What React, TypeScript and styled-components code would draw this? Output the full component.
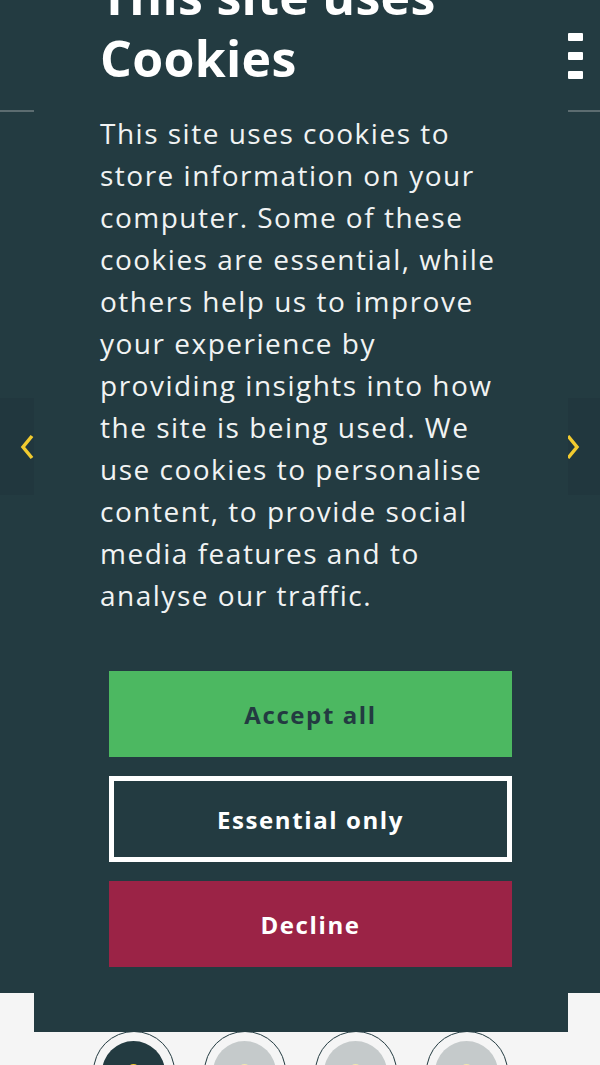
import styled, { createGlobalStyle } from 'styled-components';

const TEAL = '#233b41';
const GREEN = '#4cb861';
const BERRY = '#9b2346';
const LIGHT = '#f5f5f5';

const COOKIE_TEXT =
  'This site uses cookies to store information on your computer. Some of these cookies are essential, while others help us to improve your experience by providing insights into how the site is being used. We use cookies to personalise content, to provide social media features and to analyse our traffic.';

const FEATURES = [{ active: true }, { active: false }, { active: false }, { active: false }];

const GlobalStyle = createGlobalStyle`
  body {
    margin: 0;
    background-color: ${TEAL};
    font-family: 'Open Sans', 'Liberation Sans', sans-serif;
  }
`;

export default function App() {
  return (
    <>
      <GlobalStyle />
      <Page>
        <Header>
          <Burger aria-label='menu'>
            <span />
            <span />
            <span />
          </Burger>
        </Header>
        <Hero>
          <ArrowBox>
            <Chevron dir='left' />
          </ArrowBox>
          <ArrowBox>
            <Chevron dir='right' />
          </ArrowBox>
        </Hero>
        <Features>
          {FEATURES.map((f, i) => (
            <Ring key={i}>
              <Disc $active={f.active}>
                <Dot $active={f.active} />
              </Disc>
            </Ring>
          ))}
        </Features>

        <Modal role='dialog'>
          <Title>This site uses Cookies</Title>
          <Body>{COOKIE_TEXT}</Body>
          <Buttons>
            <Button $variant='accept'>Accept all</Button>
            <Button $variant='outline'>Essential only</Button>
            <Button $variant='decline'>Decline</Button>
          </Buttons>
        </Modal>
      </Page>
    </>
  );
}

const Chevron = ({ dir }: { dir: 'left' | 'right' }) => (
  <svg width='14' height='26' viewBox='0 0 14 26'>
    <path
      d={dir === 'left' ? 'M12 2 L3 13 L12 24' : 'M2 2 L11 13 L2 24'}
      fill='none'
      stroke='#f2cb2f'
      strokeWidth='3.5'
    />
  </svg>
);

// ROOT
const Page = styled.div`
  position: relative;
  height: 1065px;
  overflow: hidden;
  display: flex;
  flex-direction: column;
`;

// HEADER
const Header = styled.header`
  flex-shrink: 0;
  height: 112px;
  border-bottom: 2px solid #5c6c70;
  display: flex;
  justify-content: flex-end;
  align-items: flex-start;
  padding: 33px 17px 0 0;
  box-sizing: border-box;
`;

const Burger = styled.div`
  display: flex;
  flex-direction: column;
  gap: 11px;

  span {
    display: block;
    width: 15px;
    height: 8px;
    border-radius: 1px;
    background-color: #fff;
  }
`;

// HERO
const Hero = styled.section`
  flex-shrink: 0;
  height: 881px;
  display: flex;
  justify-content: space-between;
  align-items: flex-start;
  padding-top: 286px;
  box-sizing: border-box;
`;

const ArrowBox = styled.div`
  width: 54px;
  height: 97px;
  background-color: #21373e;
  display: flex;
  align-items: center;
  justify-content: center;
`;

// FEATURES
const Features = styled.section`
  flex: 1;
  background-color: ${LIGHT};
  display: flex;
  justify-content: center;
  gap: 29px;
  padding-top: 38px;
`;

const Ring = styled.div`
  width: 82px;
  height: 82px;
  flex-shrink: 0;
  border-radius: 50%;
  border: 1.5px solid ${TEAL};
  box-sizing: border-box;
  display: flex;
  align-items: center;
  justify-content: center;
`;

const Disc = styled.div<{ $active: boolean }>`
  width: 63px;
  height: 63px;
  border-radius: 50%;
  background-color: ${(p) => (p.$active ? TEAL : '#c5cacb')};
  display: flex;
  justify-content: center;
  padding-top: 23px;
  box-sizing: border-box;
`;

const Dot = styled.div<{ $active: boolean }>`
  width: 13px;
  height: 13px;
  border-radius: 50%;
  background-color: ${(p) => (p.$active ? '#f2cb2f' : '#f3e7b0')};
`;

// MODAL
const Modal = styled.div`
  position: absolute;
  left: 34px;
  bottom: 33px;
  width: 534px;
  box-sizing: border-box;
  padding: 0 56px 65px 66px;
  background-color: ${TEAL};
  color: #fff;
`;

const Title = styled.h2`
  margin: 0 0 23px;
  font-size: 50px;
  line-height: 62px;
  font-weight: 700;
  letter-spacing: 0.3px;
`;

const Body = styled.p`
  margin: 0 0 55px;
  font-size: 28px;
  line-height: 42px;
  color: #f1f3f3;
  letter-spacing: 1.5px;
`;

const Buttons = styled.div`
  display: flex;
  flex-direction: column;
  gap: 19px;
  padding-left: 9px;
`;

const Button = styled.button<{ $variant: 'accept' | 'outline' | 'decline' }>`
  height: 86px;
  width: 100%;
  border: none;
  font-family: inherit;
  font-size: 24px;
  font-weight: 700;
  letter-spacing: 1.6px;
  cursor: pointer;
  background-color: ${(p) =>
    p.$variant === 'accept' ? GREEN : p.$variant === 'decline' ? BERRY : TEAL};
  color: ${(p) => (p.$variant === 'accept' ? TEAL : '#fff')};
  box-shadow: ${(p) => (p.$variant === 'outline' ? 'inset 0 0 0 5px #fff' : 'none')};
`;
